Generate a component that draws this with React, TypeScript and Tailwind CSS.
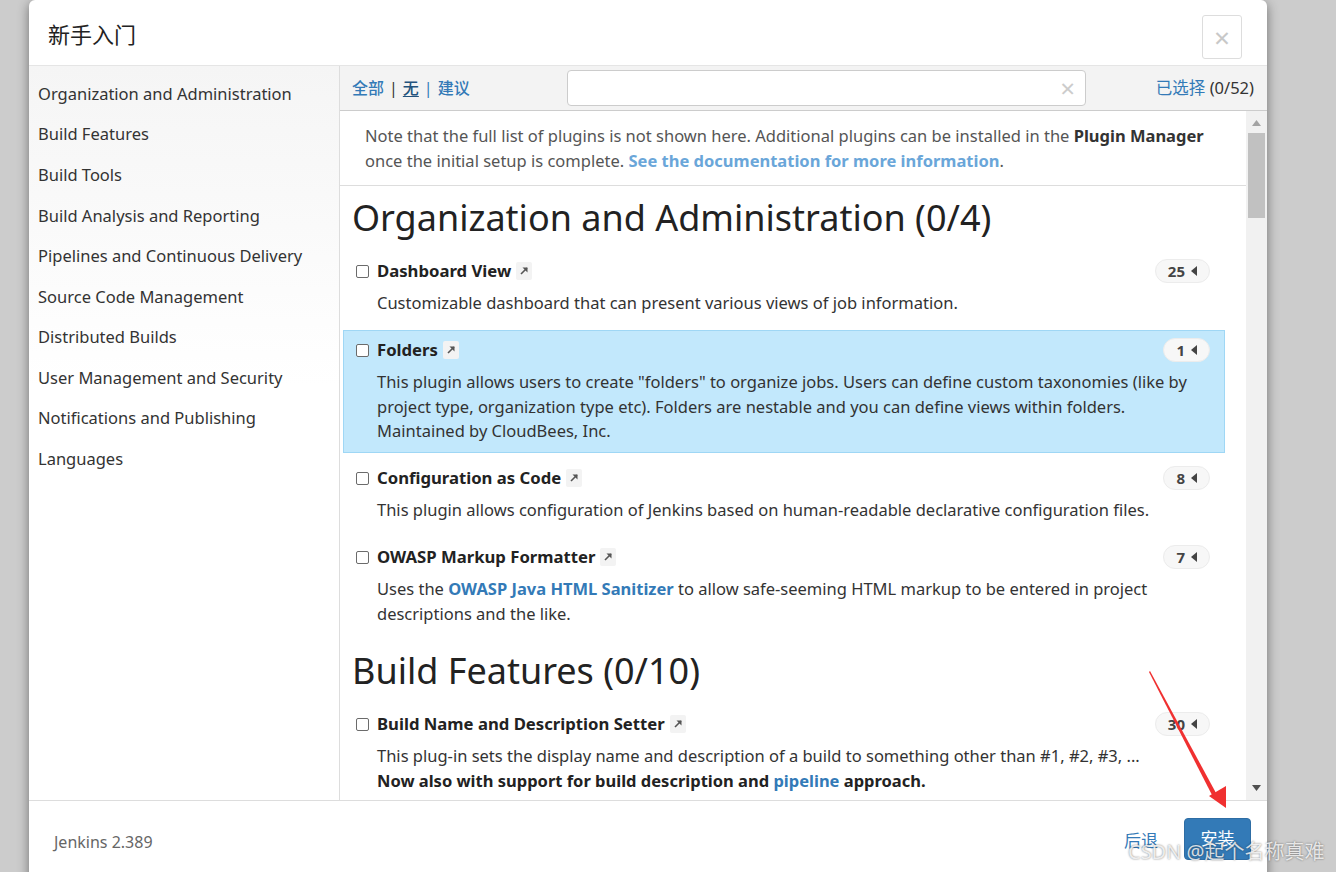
import React from 'react';

const categories = [
  'Organization and Administration',
  'Build Features',
  'Build Tools',
  'Build Analysis and Reporting',
  'Pipelines and Continuous Delivery',
  'Source Code Management',
  'Distributed Builds',
  'User Management and Security',
  'Notifications and Publishing',
  'Languages',
];

const font = "font-['Noto_Sans','Noto_Sans_CJK_SC',sans-serif]";

function ExtLink() {
  return (
    <span className="ml-[5px] inline-flex h-[18px] w-[16px] items-center justify-center rounded-[2px] bg-[#f3f3f3] align-middle">
      <svg width="10" height="10" viewBox="0 0 10 10">
        <path d="M2 8 L8 2" stroke="#555" strokeWidth="1.6" />
        <path d="M3.5 1.5 H8.5 V6.5 Z" fill="#555" />
      </svg>
    </span>
  );
}

function Badge({ n }: { n: number }) {
  return (
    <span className="flex h-[24px] items-center gap-[6px] rounded-full border border-[#ececec] bg-[#f7f7f7] px-[12px] text-[15px] font-bold text-[#444]">
      {n}
      <svg width="6" height="10" viewBox="0 0 6 10">
        <path d="M6 0 V10 L0 5 Z" fill="#444" />
      </svg>
    </span>
  );
}

function Plugin({
  name,
  count,
  active,
  children,
}: {
  name: string;
  count: number;
  active?: boolean;
  children: React.ReactNode;
}) {
  return (
    <div
      className={
        'ml-[3px] mr-[21px] mb-[5.5px] border pt-[7px] pb-[8px] pl-[12px] pr-[14px] ' +
        (active ? 'border-[#9fd7f5] bg-[#c2e8fc]' : 'border-transparent')
      }
    >
      <div className="flex h-[24px] items-center justify-between">
        <div className="flex items-center">
          <span className="mr-[8px] h-[13px] w-[13px] rounded-[2px] border border-[#6b6b6b] bg-white" />
          <span className="text-[16.7px] font-bold text-[#222]">{name}</span>
          <ExtLink />
        </div>
        <Badge n={count} />
      </div>
      <div className="mt-[8px] pl-[21px] text-[16.5px] leading-[24.5px] text-[#333]">{children}</div>
    </div>
  );
}

export default function App() {
  return (
    <div className={`relative h-[872px] w-[1336px] overflow-hidden bg-[#cccccc] ${font}`}>
      <div className="ml-[29px] flex h-[900px] w-[1238px] flex-col rounded-t-[6px] bg-white shadow-[0_3px_12px_rgba(0,0,0,0.45)]">
        {/* header */}
        <div className="flex h-[66px] shrink-0 items-start justify-between border-b border-[#e5e5e5] pl-[19px] pr-[25px]">
          <h1 className="mt-[18px] text-[22px] leading-[32px] text-[#222]">新手入门</h1>
          <button className="mt-[15px] flex h-[44px] w-[40px] items-center justify-center rounded-[3px] border border-[#dddddd] text-[28px] leading-none text-[#c8c8c8]">
            ×
          </button>
        </div>

        {/* body */}
        <div className="flex h-[734px] shrink-0">
          <ul className="w-[311px] shrink-0 border-r border-[#dddddd] bg-[linear-gradient(to_bottom,#f5f5f5,#ffffff_320px)] pt-[8px] pl-[9px]">
            {categories.map((c) => (
              <li key={c} className="flex h-[40.56px] items-center text-[16.5px] text-[#333]">
                {c}
              </li>
            ))}
          </ul>

          <div className="flex min-w-0 flex-1 flex-col">
            {/* toolbar */}
            <div className="flex h-[45px] shrink-0 items-center border-b border-[#cccccc] bg-[#f3f3f3] pl-[12px] pr-[13px]">
              <div className="flex w-[215px] items-center gap-[3px] text-[16px]">
                <span className="font-medium text-[#337ab7]">全部</span>
                <span className="px-[2px] text-[#333]">|</span>
                <span className="font-medium text-[#23527c] underline underline-offset-[2px]">无</span>
                <span className="px-[2px] text-[#337ab7]">|</span>
                <span className="font-medium text-[#337ab7]">建议</span>
              </div>
              <div className="flex h-[36px] w-[519px] items-center justify-end rounded-[4px] border border-[#cccccc] bg-white pr-[10px] text-[26px] leading-none text-[#cccccc]">
                ×
              </div>
              <div className="ml-auto text-[16.5px]">
                <span className="text-[#337ab7]">已选择</span>
                <span className="text-[#333]"> (0/52)</span>
              </div>
            </div>

            <div className="flex min-h-0 flex-1">
              {/* list */}
              <div className="min-w-0 flex-1 overflow-hidden">
                <div className="border-b border-[#dddddd] py-[12px] pl-[25px] pr-[10px] text-[16.5px] leading-[25px] whitespace-nowrap text-[#555]">
                  Note that the full list of plugins is not shown here. Additional plugins can be installed in the{' '}
                  <b className="text-[#333]">Plugin Manager</b>
                  <br />
                  once the initial setup is complete.{' '}
                  <b className="text-[#6aa6d9]">See the documentation for more information</b>.
                </div>

                <h2 className="mt-[11px] mb-[12px] pl-[12px] text-[36px] leading-[42px] text-[#222]">
                  Organization and Administration (0/4)
                </h2>

                <Plugin name="Dashboard View" count={25}>
                  Customizable dashboard that can present various views of job information.
                </Plugin>
                <Plugin name="Folders" count={1} active>
                  <span className="whitespace-nowrap">
                    This plugin allows users to create "folders" to organize jobs. Users can define custom taxonomies (like by
                  </span>
                  <br />
                  project type, organization type etc). Folders are nestable and you can define views within folders.
                  <br />
                  Maintained by CloudBees, Inc.
                </Plugin>
                <Plugin name="Configuration as Code" count={8}>
                  This plugin allows configuration of Jenkins based on human-readable declarative configuration files.
                </Plugin>
                <Plugin name="OWASP Markup Formatter" count={7}>
                  <span className="whitespace-nowrap">
                    Uses the <b className="text-[#337ab7]">OWASP Java HTML Sanitizer</b> to allow safe-seeming HTML markup to
                    be entered in project
                  </span>
                  <br />
                  descriptions and the like.
                </Plugin>

                <h2 className="mt-[15px] mb-[12px] pl-[12px] text-[36px] leading-[42px] text-[#222]">
                  Build Features (0/10)
                </h2>

                <Plugin name="Build Name and Description Setter" count={30}>
                  This plug-in sets the display name and description of a build to something other than #1, #2, #3, ...
                  <br />
                  <b className="text-[#222]">
                    Now also with support for build description and <span className="text-[#337ab7]">pipeline</span>{' '}
                    approach.
                  </b>
                </Plugin>
              </div>

              {/* scrollbar */}
              <div className="relative w-[21px] shrink-0 bg-[#f1f1f1]">
                <svg className="absolute left-[6px] top-[9px]" width="9" height="6" viewBox="0 0 9 6">
                  <path d="M0 6 L4.5 0 L9 6 Z" fill="#a3a3a3" />
                </svg>
                <div className="absolute left-[2px] top-[22px] h-[85px] w-[17px] bg-[#c1c1c1]" />
                <svg className="absolute bottom-[9px] left-[6px]" width="9" height="6" viewBox="0 0 9 6">
                  <path d="M0 0 L9 0 L4.5 6 Z" fill="#505050" />
                </svg>
              </div>
            </div>
          </div>
        </div>

        {/* footer */}
        <div className="flex h-[100px] shrink-0 items-start border-t border-[#dddddd] pl-[25px] pr-[16px] pt-[17px]">
          <span className="mt-[12px] text-[16px] text-[#666]">Jenkins 2.389</span>
          <span className="ml-auto mt-[10px] text-[17px] text-[#337ab7]">后退</span>
          <button className="ml-[26px] h-[42px] w-[67px] rounded-[4px] border border-[#2e6da4] bg-[#337ab7] text-[17px] text-white">
            安装
          </button>
        </div>
      </div>

      {/* annotation arrow */}
      <svg className="pointer-events-none absolute left-0 top-0" width="1336" height="872">
        <polygon points="1149,672 1150,671 1216,793 1212,795" fill="#f03030" />
        <polygon points="1209,796 1226,786 1226,808" fill="#f03030" />
      </svg>

      {/* watermark */}
      <div className="pointer-events-none absolute left-[1128px] top-[838px] text-[20px] leading-[28px] text-white/80 [text-shadow:0_0_2px_rgba(0,0,0,0.55)]">
        CSDN @起个名称真难
      </div>
    </div>
  );
}
